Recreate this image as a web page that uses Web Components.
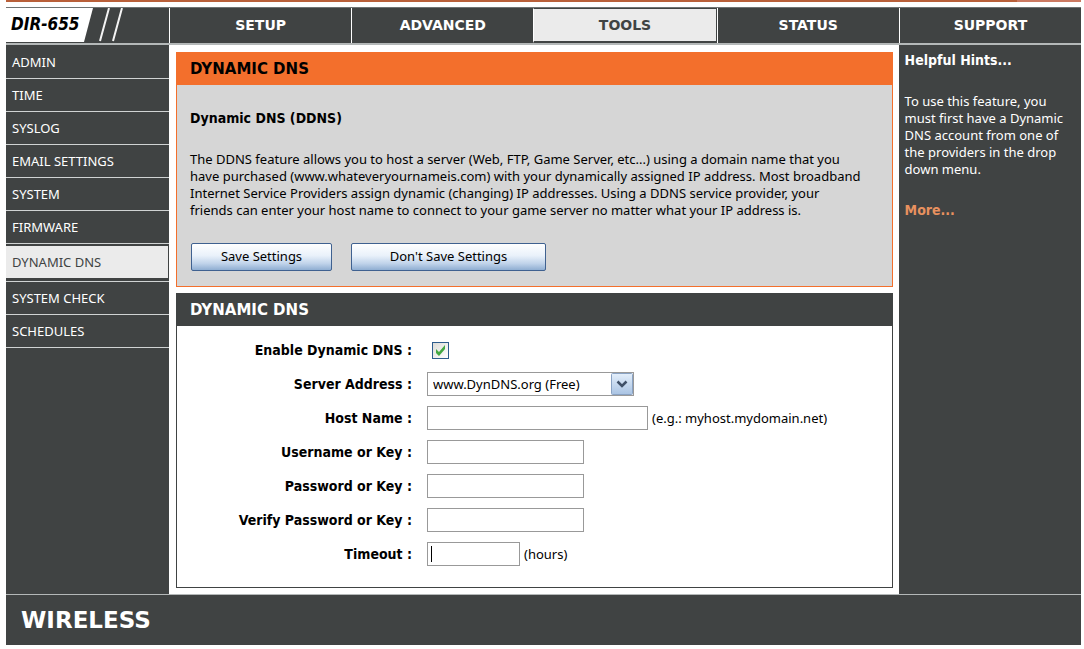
<!DOCTYPE html>
<html lang="en">
<head>
<meta charset="utf-8">
<meta name="viewport" content="width=device-width, initial-scale=1">
<title>DIR-655 : Dynamic DNS</title>
<style>
  :root {
    --dark: #404343;
    --light: #ebebeb;
    --line: #b4b8b8;
    --orange: #f36f2c;
    --rail: 163px;
    --text: "Noto Sans", sans-serif;
    --strong: "DejaVu Sans Condensed", "DejaVu Sans", sans-serif;
    --head: "DejaVu Sans", sans-serif;
  }
  body {
    margin: 0;
    background: #fff;
    color: #000;
    font: 13px/17px var(--text);
  }
</style>
</head>
<body>
<router-page></router-page>

<script>
class RouterTabs extends HTMLElement {
  connectedCallback() {
    const tabs = ['Setup', 'Advanced', 'Tools', 'Status', 'Support'];
    const active = this.getAttribute('active');

    this.attachShadow({mode: 'open'}).innerHTML = `
      <style>
        :host {
          display: flex;
          background: var(--dark);
          border-top: 1px solid #6f7373;
          border-bottom: 2px solid var(--line);
        }
        .model {
          display: flex;
          box-sizing: border-box;
          width: var(--rail);
          height: 34px;
        }
        .name {
          box-sizing: border-box;
          width: 87px;
          padding-left: 5px;
          background: #fff;
          clip-path: polygon(0 0, 100% 0, 78px 100%, 0 100%);
          color: #000;
          font: italic bold 17px/32px var(--strong);
          white-space: nowrap;
        }
        svg { width: 32px; height: 34px; margin-left: -2px; }
        nav { display: flex; flex: 1; }
        a {
          flex: 1;
          box-sizing: border-box;
          border-left: 1px solid #fff;
          color: #fff;
          font: bold 14px/34px var(--head);
          text-align: center;
          text-decoration: none;
          text-transform: uppercase;
        }
        a[aria-current] {
          background: var(--light);
          border: 1px solid var(--dark);
          border-bottom-width: 2px;
          border-left-color: #fff;
          color: var(--dark);
          line-height: 32px;
        }
      </style>
      <div class="model">
        <span class="name">DIR-655</span>
        <svg viewBox="0 0 32 34" fill="none" stroke="#f4f4f4" stroke-width="2" aria-hidden="true">
          <path d="M18 0L9 33M31 0L22 33"/>
        </svg>
      </div>
      <nav>
        ${tabs.map(t => `<a href="#" ${t === active ? 'aria-current="page"' : ''}>${t}</a>`).join('')}
      </nav>`;
  }
}

class RouterMenu extends HTMLElement {
  connectedCallback() {
    const items = ['Admin', 'Time', 'Syslog', 'Email Settings', 'System', 'Firmware',
      'Dynamic DNS', 'System Check', 'Schedules'];
    const active = this.getAttribute('active');

    this.attachShadow({mode: 'open'}).innerHTML = `
      <style>
        :host {
          display: block;
          background: var(--dark);
        }
        nav { padding-top: 1px; }
        a {
          display: block;
          padding-left: 6px;
          border-bottom: 1px solid #d0d3d3;
          color: #fff;
          line-height: 32px;
          text-decoration: none;
          text-transform: uppercase;
        }
        a[aria-current] {
          padding: 2px 1px 3px 0;
          line-height: 32px;
        }
        a[aria-current] span {
          display: block;
          padding-left: 6px;
          background: var(--light);
          color: var(--dark);
        }
      </style>
      <nav>
        ${items.map(t => `<a href="#" ${t === active ? 'aria-current="page"' : ''}><span>${t}</span></a>`).join('')}
      </nav>`;
  }
}

class RouterPanel extends HTMLElement {
  connectedCallback() {
    this.attachShadow({mode: 'open'}).innerHTML = `
      <style>
        :host {
          display: block;
          border: 1px solid var(--dark);
          background: #fff;
        }
        h2 {
          margin: 0;
          padding-left: 13px;
          background: var(--dark);
          color: #fff;
          font: bold 15px/32px var(--head);
          text-transform: uppercase;
        }
        .body { padding: 12px 0 21px; }
        :host([intro]) {
          border-color: var(--orange);
          background: #d6d6d6;
        }
        :host([intro]) h2 {
          background: var(--orange);
          color: #000;
        }
        :host([intro]) .body { padding: 25px 13px 15px; }
      </style>
      <h2>${this.getAttribute('heading')}</h2>
      <div class="body"><slot></slot></div>`;
  }
}

class RouterButton extends HTMLElement {
  connectedCallback() {
    this.attachShadow({mode: 'open'}).innerHTML = `
      <style>
        :host { display: inline-block; }
        button {
          display: block;
          min-width: 141px;
          height: 28px;
          padding: 0 8px 2px;
          border: 1px solid #3f6190;
          border-radius: 2px;
          background: linear-gradient(#fff, #e9f1fa 45%, #c0d3ea 75%, #8faed2);
          color: #000;
          font: inherit;
          white-space: nowrap;
        }
        :host([wide]) button { min-width: 195px; }
      </style>
      <button type="button"><slot></slot></button>`;
  }
}

class FormField extends HTMLElement {
  connectedCallback() {
    this.attachShadow({mode: 'open'}).innerHTML = `
      <style>
        :host {
          display: flex;
          align-items: center;
          gap: 15px;
          height: 24px;
        }
        label {
          width: 235px;
          font: bold 14px/17px var(--strong);
          text-align: right;
        }
        .control {
          position: relative;
          display: flex;
          align-items: center;
          gap: 4px;
        }
        .text, select {
          box-sizing: border-box;
          width: 157px;
          height: 24px;
          margin: 0;
          padding: 0 5px;
          border: 1px solid #999;
          border-radius: 0;
          background: #fff;
          color: #000;
          font: inherit;
          outline: none;
        }
        .text.long { width: 221px; }
        .text.short { width: 93px; }
        .text.caret {
          background: linear-gradient(#000, #000) 3px 3px / 1px 16px no-repeat #fff;
          caret-color: transparent;
        }
        select {
          width: 207px;
          appearance: none;
        }
        .arrow {
          position: absolute;
          right: 1px;
          top: 1px;
          width: 22px;
          height: 22px;
          pointer-events: none;
        }
        .check {
          appearance: none;
          box-sizing: border-box;
          width: 17px;
          height: 17px;
          margin: 0 0 0 5px;
          border: 1px solid #2d5c8c;
          background: linear-gradient(135deg, #dcdcd7, #fff);
        }
        .tick {
          position: absolute;
          right: 0;
          top: 0;
          width: 17px;
          height: 17px;
          pointer-events: none;
        }
      </style>
      <label for="field">${this.getAttribute('label')} :</label>
      <div class="control">${this.control()}</div>`;
  }

  control() {
    const size = this.getAttribute('size') || '';
    const hint = this.getAttribute('hint');
    switch (this.getAttribute('type')) {
      case 'checkbox':
        return `
          <input id="field" class="check" type="checkbox" checked>
          <svg class="tick" viewBox="0 0 17 17" aria-hidden="true">
            <path d="M4 7v4l3 3 6-7V3L7 10z" fill="#43a843"/>
          </svg>`;
      case 'select':
        return `
          <select id="field"><option>${this.getAttribute('value')}</option></select>
          <svg class="arrow" viewBox="0 0 22 22" aria-hidden="true">
            <defs>
              <linearGradient id="face" x2="0" y2="1">
                <stop stop-color="#e4effb"/><stop offset="1" stop-color="#a9c3e3"/>
              </linearGradient>
            </defs>
            <rect x=".5" y=".5" width="21" height="21" rx="1" fill="url(#face)" stroke="#8aa3c4"/>
            <path d="M6.500 8.500l4.500 4.500 4.500-4.500" fill="none" stroke="#3f5068" stroke-width="2.500"/>
          </svg>`;
      default:
        return `
          <input id="field" class="text ${size}" type="${this.getAttribute('type') || 'text'}">
          ${hint ? `<span>${hint}</span>` : ''}`;
    }
  }
}

class RouterPage extends HTMLElement {
  connectedCallback() {
    this.attachShadow({mode: 'open'}).innerHTML = `
      <style>
        :host {
          display: block;
          padding: 0 3px 4px 6px;
        }
        .strip {
          height: 2px;
          margin-bottom: 5px;
          background: linear-gradient(100deg, #b9603a 94%, #cc7a62 94%);
        }
        .columns {
          display: grid;
          grid-template-columns: var(--rail) 4fr 1fr;
          border-bottom: 1px solid var(--line);
        }
        main {
          display: flex;
          flex-direction: column;
          gap: 6px;
          min-width: 0;
          padding: 7px 6px 6px 7px;
        }
        h3, p { margin: 0; }
        h3, aside a { font: bold 14px/17px var(--strong); }
        main p { margin: 24px 0; white-space: nowrap; }
        .buttons {
          display: flex;
          gap: 19px;
          padding-left: 1px;
        }
        .fields {
          display: flex;
          flex-direction: column;
          gap: 10px;
        }
        aside {
          padding: 7px 6px;
          background: var(--dark);
          color: #fff;
        }
        aside p { margin: 24px 0; }
        aside a {
          color: #e8915f;
          text-decoration: none;
        }
        footer {
          padding-left: 15px;
          background: var(--dark);
          color: #fff;
          font: bold 23px/50px var(--head);
        }
      </style>
      <div class="strip"></div>
      <router-tabs active="Tools"></router-tabs>
      <div class="columns">
        <router-menu active="Dynamic DNS"></router-menu>
        <main>
          <router-panel intro heading="Dynamic DNS">
            <h3>Dynamic DNS (DDNS)</h3>
            <p>The DDNS feature allows you to host a server (Web, FTP, Game Server, etc...) using a domain name that you<br>
              have purchased (www.whateveryournameis.com) with your dynamically assigned IP address. Most broadband<br>
              Internet Service Providers assign dynamic (changing) IP addresses. Using a DDNS service provider, your<br>
              friends can enter your host name to connect to your game server no matter what your IP address is.</p>
            <div class="buttons">
              <router-button>Save Settings</router-button>
              <router-button wide>Don't Save Settings</router-button>
            </div>
          </router-panel>
          <router-panel heading="Dynamic DNS">
            <form class="fields">
              <form-field type="checkbox" label="Enable Dynamic DNS"></form-field>
              <form-field type="select" label="Server Address" value="www.DynDNS.org (Free)"></form-field>
              <form-field label="Host Name" size="long" hint="(e.g.: myhost.mydomain.net)"></form-field>
              <form-field label="Username or Key"></form-field>
              <form-field type="password" label="Password or Key"></form-field>
              <form-field type="password" label="Verify Password or Key"></form-field>
              <form-field label="Timeout" size="short caret" hint="(hours)"></form-field>
            </form>
          </router-panel>
        </main>
        <aside>
          <h3>Helpful Hints...</h3>
          <p>To use this feature, you<br>must first have a Dynamic<br>DNS account from one of<br>the providers in the drop<br>down menu.</p>
          <a href="#">More...</a>
        </aside>
      </div>
      <footer>WIRELESS</footer>`;
  }
}

customElements.define('router-tabs', RouterTabs);
customElements.define('router-menu', RouterMenu);
customElements.define('router-panel', RouterPanel);
customElements.define('router-button', RouterButton);
customElements.define('form-field', FormField);
customElements.define('router-page', RouterPage);
</script>
</body>
</html>
